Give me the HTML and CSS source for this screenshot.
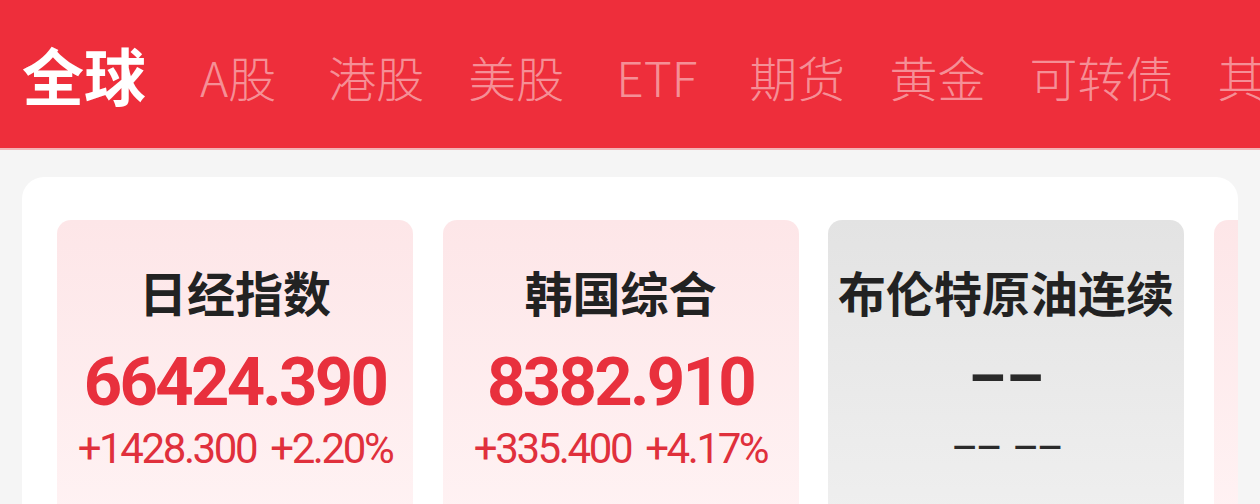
FILE: index.html
```html
<!DOCTYPE html>
<html lang="zh">
<head>
<meta charset="utf-8">
<title>全球市场</title>
<link rel="stylesheet" href="styles.css">
</head>
<body>
<header class="topbar">
  <nav class="tabs">
    <span class="tab active">全球</span>
    <span class="tab tab-a">A股</span>
    <span class="tab">港股</span>
    <span class="tab">美股</span>
    <span class="tab tab-etf">ETF</span>
    <span class="tab">期货</span>
    <span class="tab">黄金</span>
    <span class="tab">可转债</span>
    <span class="tab">其他</span>
  </nav>
</header>
<main class="panel">
  <div class="cards">
    <div class="card up">
      <div class="name">日经指数</div>
      <div class="price">66424.390</div>
      <div class="change"><span>+1428.300</span><span>+2.20%</span></div>
    </div>
    <div class="card up">
      <div class="name">韩国综合</div>
      <div class="price">8382.910</div>
      <div class="change"><span>+335.400</span><span>+4.17%</span></div>
    </div>
    <div class="card flat">
      <div class="name">布伦特原油连续</div>
      <div class="price dash">––</div>
      <div class="change dash-sm"><span>––</span><span>––</span></div>
    </div>
    <div class="card up"></div>
  </div>
</main>
</body>
</html>
```
FILE: styles.css
```css
html, body {
  margin: 0;
  padding: 0;
}
body {
  width: 1260px;
  height: 504px;
  overflow: hidden;
  background: #f5f5f5;
  font-family: "Noto Sans CJK SC", "Noto Sans", sans-serif;
}
.topbar {
  height: 148px;
  background: #ee2e3b;
  border-bottom: 2px solid #f2b3b6;
  display: flex;
  align-items: center;
  overflow: hidden;
}
.tabs {
  display: flex;
  align-items: center;
  gap: 44px;
  padding-left: 22px;
  white-space: nowrap;
  padding-top: 4px;
}
.tab {
  font-size: 48px;
  font-weight: 300;
  line-height: 1;
  color: rgba(255, 255, 255, 0.48);
}
.tab.active {
  font-size: 62px;
  font-weight: 700;
  color: #ffffff;
  margin-right: 10px;
  margin-top: -4px;
}
.tab-a {
  margin-right: 8px;
}
.tab-etf {
  margin-left: 8px;
  margin-right: 8px;
}
.panel {
  margin: 27px 22px 0 22px;
  height: 400px;
  background: #ffffff;
  border-radius: 22px;
  overflow: hidden;
  padding: 43px 0 0 35px;
  box-sizing: border-box;
}
.cards {
  display: flex;
  gap: 29.5px;
}
.card {
  flex: 0 0 356px;
  height: 320px;
  border-radius: 14px;
  display: flex;
  flex-direction: column;
  align-items: center;
  box-sizing: border-box;
  padding-top: 43px;
}
.card.up {
  background: linear-gradient(180deg, #fde6e8 0%, #fff3f4 100%);
}
.card.flat {
  background: linear-gradient(180deg, #e3e3e3 0%, #f0f0f0 100%);
}
.name {
  font-size: 48px;
  font-weight: 700;
  line-height: 56px;
  color: #222222;
  white-space: nowrap;
}
.price {
  font-family: Roboto, "Liberation Sans", sans-serif;
  font-size: 67px;
  font-weight: 700;
  line-height: 72px;
  letter-spacing: -2.7px;
  color: #e8303d;
  margin-top: 27px;
}
.change {
  font-family: Roboto, "Liberation Sans", sans-serif;
  font-size: 42px;
  line-height: 48px;
  letter-spacing: -2.4px;
  color: #e0303c;
  display: flex;
  gap: 14px;
  margin-top: 7px;
}
.price.dash {
  font-size: 60px;
  color: #2a2a2a;
  letter-spacing: 0;
  position: relative;
  top: -4px;
}
.change.dash-sm {
  color: #2a2a2a;
  letter-spacing: -3px;
  gap: 12px;
}
```
